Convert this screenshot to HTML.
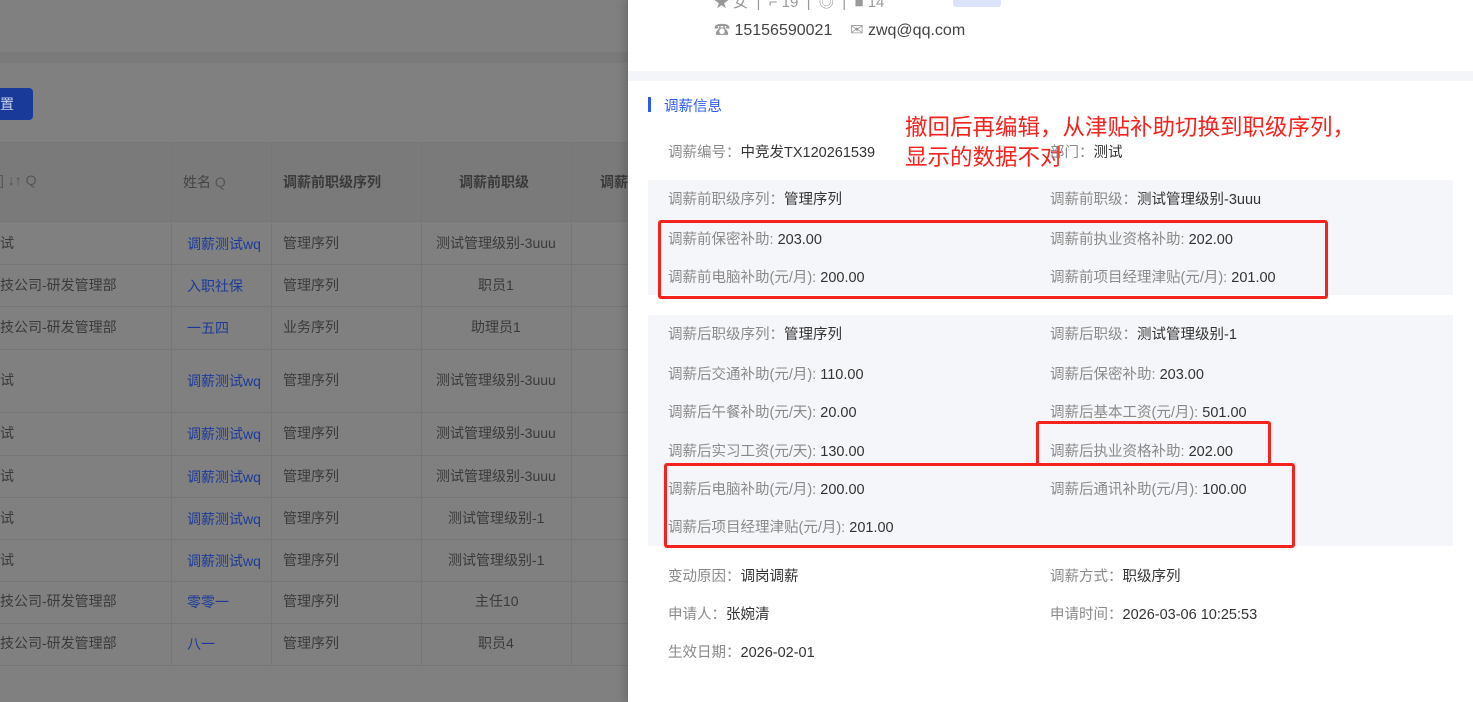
<!DOCTYPE html>
<html><head><meta charset="utf-8"><style>
*{margin:0;padding:0;box-sizing:border-box}
body{width:1473px;height:702px;overflow:hidden;position:relative;background:#808080;font-family:"Liberation Sans","Noto Sans CJK SC",sans-serif;font-size:14px}
.a{position:absolute;white-space:nowrap}
.r{font-size:14.5px}
.l{color:#8a8a8a}.v{color:#333}
.t{color:#3a3a3a;font-size:14px}
.lk{color:#1c3a9a}
.hl{position:absolute;left:0;width:628px;height:1px;background:#767676}
.vl{position:absolute;width:1px;background:#767676;top:142px;height:523px}
.rb{position:absolute;border:3px solid #f5231d;border-radius:3px}
</style></head><body>
<div class="a" style="left:0;top:52px;width:628px;height:11px;background:#7a7a7a"></div>
<div class="a" style="left:0;top:88px;width:33px;height:32px;background:#1a3a9a;border-radius:0 4px 4px 0;color:#c8d0e8;font-size:14px;line-height:32px">置</div>
<div class="a" style="left:0;top:142px;width:628px;height:79px;background:#7a7a7a"></div>
<div class="hl" style="top:142px"></div>
<div class="hl" style="top:221px"></div><div class="hl" style="top:264px"></div><div class="hl" style="top:306px"></div><div class="hl" style="top:349px"></div><div class="hl" style="top:412px"></div><div class="hl" style="top:455px"></div><div class="hl" style="top:497px"></div><div class="hl" style="top:539px"></div><div class="hl" style="top:581px"></div><div class="hl" style="top:623px"></div><div class="hl" style="top:665px"></div>
<div class="vl" style="left:171px"></div><div class="vl" style="left:271px"></div><div class="vl" style="left:421px"></div><div class="vl" style="left:571px"></div>
<div class="a t" style="left:0;top:172px;color:#555">] ↓↑ Q</div>
<div class="a t" style="left:183px;top:172px;color:#444">姓名 <span style="color:#555">Q</span></div>
<div class="a t" style="left:283px;top:172px;font-weight:bold">调薪前职级序列</div>
<div class="a t" style="left:459px;top:172px;font-weight:bold">调薪前职级</div>
<div class="a t" style="left:600px;top:172px;font-weight:bold">调薪</div>
<div class="a t" style="left:0;top:233px">试</div><div class="a lk" style="left:187px;top:234px">调薪测试wq</div><div class="a t" style="left:283px;top:233px">管理序列</div><div class="a t" style="left:436px;top:233px">测试管理级别-3uuu</div>
<div class="a t" style="left:0;top:275px">技公司-研发管理部</div><div class="a lk" style="left:187px;top:276px">入职社保</div><div class="a t" style="left:283px;top:275px">管理序列</div><div class="a t" style="left:478px;top:275px">职员1</div>
<div class="a t" style="left:0;top:317px">技公司-研发管理部</div><div class="a lk" style="left:187px;top:318px">一五四</div><div class="a t" style="left:283px;top:317px">业务序列</div><div class="a t" style="left:471px;top:317px">助理员1</div>
<div class="a t" style="left:0;top:370px">试</div><div class="a lk" style="left:187px;top:371px">调薪测试wq</div><div class="a t" style="left:283px;top:370px">管理序列</div><div class="a t" style="left:436px;top:370px">测试管理级别-3uuu</div>
<div class="a t" style="left:0;top:423px">试</div><div class="a lk" style="left:187px;top:424px">调薪测试wq</div><div class="a t" style="left:283px;top:423px">管理序列</div><div class="a t" style="left:436px;top:423px">测试管理级别-3uuu</div>
<div class="a t" style="left:0;top:466px">试</div><div class="a lk" style="left:187px;top:467px">调薪测试wq</div><div class="a t" style="left:283px;top:466px">管理序列</div><div class="a t" style="left:436px;top:466px">测试管理级别-3uuu</div>
<div class="a t" style="left:0;top:508px">试</div><div class="a lk" style="left:187px;top:509px">调薪测试wq</div><div class="a t" style="left:283px;top:508px">管理序列</div><div class="a t" style="left:448px;top:508px">测试管理级别-1</div>
<div class="a t" style="left:0;top:550px">试</div><div class="a lk" style="left:187px;top:551px">调薪测试wq</div><div class="a t" style="left:283px;top:550px">管理序列</div><div class="a t" style="left:448px;top:550px">测试管理级别-1</div>
<div class="a t" style="left:0;top:591px">技公司-研发管理部</div><div class="a lk" style="left:187px;top:592px">零零一</div><div class="a t" style="left:283px;top:591px">管理序列</div><div class="a t" style="left:475px;top:591px">主任10</div>
<div class="a t" style="left:0;top:633px">技公司-研发管理部</div><div class="a lk" style="left:187px;top:634px">八一</div><div class="a t" style="left:283px;top:633px">管理序列</div><div class="a t" style="left:478px;top:633px">职员4</div>
<div class="a" style="left:628px;top:0;width:845px;height:702px;background:#fff;box-shadow:-4px 0 8px rgba(0,0,0,.15)"></div>
<div class="a" style="left:714px;top:-9px;color:#999;font-size:15px">★ 女 &nbsp;|&nbsp; ⌐ 19 &nbsp;|&nbsp; ◎ &nbsp;|&nbsp; ■ 14</div>
<div class="a" style="left:953px;top:-10px;width:48px;height:17px;background:#dbe4fb;border-radius:3px"></div>
<div class="a" style="left:714px;top:16px;font-size:16px;color:#444"><span style="color:#999">☎</span> 15156590021 &nbsp; &nbsp;<span style="color:#999">✉</span> zwq@qq.com</div>
<div class="a" style="left:628px;top:71px;width:845px;height:10px;background:#f4f5f8"></div>
<div class="a" style="left:648px;top:97px;width:3px;height:15px;background:#2a5bf0"></div>
<div class="a" style="left:664px;top:95px;color:#2a5bf0;font-size:14.5px">调薪信息</div>
<div class="a" style="left:905px;top:113px;color:#f5231d;font-size:22.5px;line-height:30px">撤回后再编辑，从津贴补助切换到职级序列，<br>显示的数据不对</div>
<div class="a r" style="left:668px;top:141px"><span class="l">调薪编号：</span><span class="v">中竞发TX120261539</span></div>
<div class="a r" style="left:1050px;top:141px"><span class="l">部门：</span><span class="v">测试</span></div>
<div class="a" style="left:648px;top:180px;width:805px;height:115px;background:#f5f6f9"></div>
<div class="a" style="left:648px;top:315px;width:805px;height:231px;background:#f5f6f9"></div>
<div class="a r" style="left:668px;top:188px"><span class="l">调薪前职级序列：</span><span class="v">管理序列</span></div>
<div class="a r" style="left:1050px;top:188px"><span class="l">调薪前职级：</span><span class="v">测试管理级别-3uuu</span></div>
<div class="a r" style="left:668px;top:228px"><span class="l">调薪前保密补助: </span><span class="v">203.00</span></div>
<div class="a r" style="left:1050px;top:228px"><span class="l">调薪前执业资格补助: </span><span class="v">202.00</span></div>
<div class="a r" style="left:668px;top:266px"><span class="l">调薪前电脑补助(元/月): </span><span class="v">200.00</span></div>
<div class="a r" style="left:1050px;top:266px"><span class="l">调薪前项目经理津贴(元/月): </span><span class="v">201.00</span></div>
<div class="a r" style="left:668px;top:323px"><span class="l">调薪后职级序列：</span><span class="v">管理序列</span></div>
<div class="a r" style="left:1050px;top:323px"><span class="l">调薪后职级：</span><span class="v">测试管理级别-1</span></div>
<div class="a r" style="left:668px;top:363px"><span class="l">调薪后交通补助(元/月): </span><span class="v">110.00</span></div>
<div class="a r" style="left:1050px;top:363px"><span class="l">调薪后保密补助: </span><span class="v">203.00</span></div>
<div class="a r" style="left:668px;top:401px"><span class="l">调薪后午餐补助(元/天): </span><span class="v">20.00</span></div>
<div class="a r" style="left:1050px;top:401px"><span class="l">调薪后基本工资(元/月): </span><span class="v">501.00</span></div>
<div class="a r" style="left:668px;top:440px"><span class="l">调薪后实习工资(元/天): </span><span class="v">130.00</span></div>
<div class="a r" style="left:1050px;top:440px"><span class="l">调薪后执业资格补助: </span><span class="v">202.00</span></div>
<div class="a r" style="left:668px;top:478px"><span class="l">调薪后电脑补助(元/月): </span><span class="v">200.00</span></div>
<div class="a r" style="left:1050px;top:478px"><span class="l">调薪后通讯补助(元/月): </span><span class="v">100.00</span></div>
<div class="a r" style="left:668px;top:516px"><span class="l">调薪后项目经理津贴(元/月): </span><span class="v">201.00</span></div>
<div class="a r" style="left:668px;top:565px"><span class="l">变动原因：</span><span class="v">调岗调薪</span></div>
<div class="a r" style="left:1050px;top:565px"><span class="l">调薪方式：</span><span class="v">职级序列</span></div>
<div class="a r" style="left:668px;top:603px"><span class="l">申请人：</span><span class="v">张婉清</span></div>
<div class="a r" style="left:1050px;top:603px"><span class="l">申请时间：</span><span class="v">2026-03-06 10:25:53</span></div>
<div class="a r" style="left:668px;top:641px"><span class="l">生效日期：</span><span class="v">2026-02-01</span></div>
<div class="rb" style="left:658px;top:220px;width:670px;height:79px"></div>
<div class="rb" style="left:1036px;top:421px;width:235px;height:44px;border-bottom:none"></div>
<div class="rb" style="left:664px;top:463px;width:631px;height:85px"></div>
</body></html>
